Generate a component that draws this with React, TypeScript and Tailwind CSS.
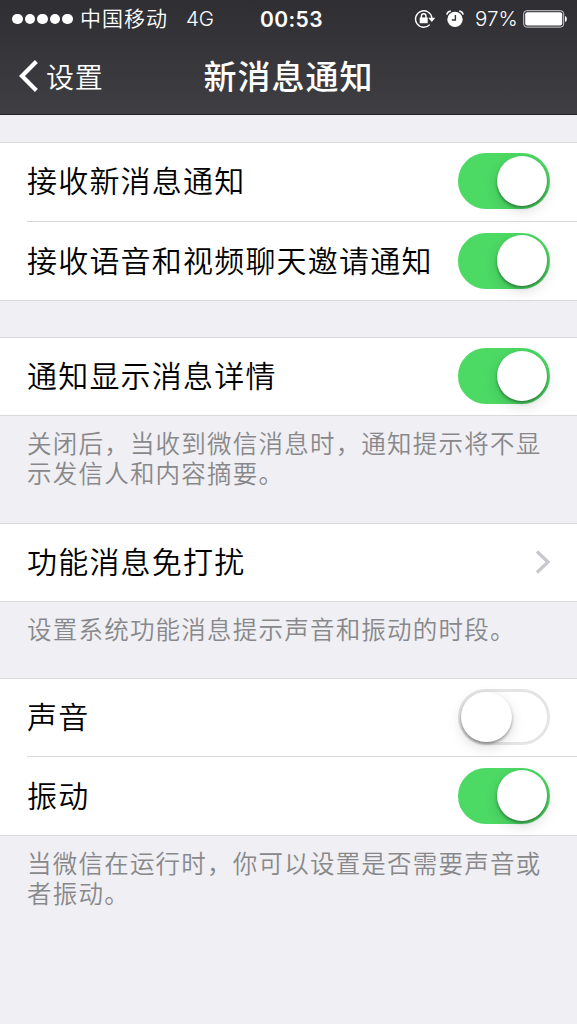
import { useState } from "react";
import clsx from "clsx";

function Toggle({ label, defaultOn = true }: { label: string; defaultOn?: boolean }) {
  const [on, setOn] = useState(defaultOn);

  return (
    <button
      role="switch"
      aria-checked={on}
      aria-label={label}
      onClick={() => setOn(!on)}
      className={clsx(
        "flex h-14 w-[92px] shrink-0 items-center rounded-full border-[3px] transition-colors",
        on ? "justify-end border-[#4cd964] bg-[#4cd964]" : "justify-start border-[#e5e5e5] bg-white"
      )}
    >
      <span className="size-[50.5px] rounded-full bg-white shadow-[0_5px_14px_rgba(0,0,0,0.14),0_2px_3px_rgba(0,0,0,0.35)]" />
    </button>
  );
}

function ToggleRow({ label, defaultOn }: { label: string; defaultOn?: boolean }) {
  return (
    <div className="flex h-full items-center justify-between pb-px pr-[27px]">
      <span className="pb-[4px] text-[30px] font-[350] leading-[40px] tracking-[1.2px] text-black">{label}</span>
      <Toggle label={label} defaultOn={defaultOn} />
    </div>
  );
}

function StatusBar() {
  return (
    <div className="flex h-[38px] items-center pl-3 pr-[10px] text-white">
      <div className="flex w-[248px] items-center">
        <div className="flex gap-[2px]">
          {[0, 1, 2, 3, 4].map((i) => (
            <span key={i} className="size-[10.6px] rounded-full bg-white" />
          ))}
        </div>
        <span className="ml-[7px] pb-[3px] text-[21px] font-[350] leading-none tracking-[1px]">中国移动</span>
        <span className="ml-[18px] font-[Inter,sans-serif] text-[20.5px] font-[350] leading-none">4G</span>
      </div>
      <span className="font-[Inter,sans-serif] text-[21px] font-semibold leading-none tracking-[0.4px]">00:53</span>
      <div className="ml-auto flex items-center">
        {/* Rotation lock */}
        <svg width="22" height="20" viewBox="0 0 22 20" fill="none" stroke="white" strokeWidth="1.4" className="-mt-px">
          <path d="M15.8 15.6A8.2 8.2 0 1 1 17.9 9" />
          <path d="M14.3 8.8h7l-3.5 4.2z" fill="white" stroke="none" />
          <rect x="5.7" y="8.4" width="8" height="5.8" fill="white" stroke="none" />
          <path d="M7.4 9V7a2.3 2.3 0 0 1 4.6 0V9" />
        </svg>
        {/* Alarm */}
        <svg width="18" height="18" viewBox="0 0 18 18" fill="none" className="-mt-px ml-[10px]">
          <circle cx="9" cy="9.4" r="7.7" fill="white" />
          <path d="M9.4 5v5H5.8" stroke="#313036" strokeWidth="1.4" />
          <path d="M.8 4.6C1.2 2.8 2.6 1.3 4.8 1M17.2 4.6c-.4-1.8-1.8-3.3-4-3.6" stroke="white" strokeWidth="1.5" />
        </svg>
        <span className="ml-[11px] w-[44px] whitespace-nowrap font-[Inter,sans-serif] text-[20.5px] font-[350] leading-none">97%</span>
        {/* Battery */}
        <svg width="44" height="18" viewBox="0 0 44 18" fill="none" className="-mt-px ml-[4px]">
          <rect x=".7" y=".7" width="40" height="16.4" rx="3" stroke="white" strokeOpacity=".75" />
          <rect x="2.2" y="2.2" width="37" height="13.4" rx="2" fill="white" />
          <path d="M42 6c1.3.4 1.8 1.5 1.8 3s-.5 2.6-1.8 3z" fill="white" />
        </svg>
      </div>
    </div>
  );
}

export default function App() {
  return (
    <div className="min-h-screen w-full bg-[#efeff4] font-['Noto_Sans_CJK_SC',sans-serif]">
      <header className="h-[115px] border-b border-[#242329] bg-linear-to-b from-[#2f2e33] to-[#3f3e43]">
        <StatusBar />
        <div className="grid h-[76px] grid-cols-[1fr_auto_1fr] items-center text-white">
          <button className="flex items-center pl-[19px]">
            <svg width="19" height="32" viewBox="0 0 19 32" fill="none" stroke="white" strokeWidth="4.2">
              <path d="M17.4 1.5 3 16l14.4 14.5" />
            </svg>
            <span className="ml-2 text-[28px] font-[350] leading-none tracking-[0.8px]">设置</span>
          </button>
          <h1 className="pb-[2px] text-[33px] font-medium leading-none tracking-[1px]">新消息通知</h1>
        </div>
      </header>

      <main>
        <section className="mt-[27px] h-[159px] border-y border-[#d9d9dc] bg-white pl-[27px]">
          <div className="h-[79px] border-b border-[#d9d9dc] pb-px">
            <ToggleRow label="接收新消息通知" />
          </div>
          <div className="h-[78px]">
            <ToggleRow label="接收语音和视频聊天邀请通知" />
          </div>
        </section>

        <section className="mt-9 h-[79px] border-y border-[#d9d9dc] bg-white pl-[27px]">
          <ToggleRow label="通知显示消息详情" />
        </section>
        <p className="h-[107px] px-[27px] pt-[12px] text-[24.5px] font-[350] leading-[30px] tracking-[1.22px] text-[#88888a]">
          关闭后，当收到微信消息时，通知提示将不显
          <br />
          示发信人和内容摘要。
        </p>

        <section className="h-[79px] border-y border-[#d9d9dc] bg-white pl-[27px]">
          <button className="flex h-full w-full items-center justify-between pb-px pr-[26px]">
            <span className="pb-[4px] text-[30px] font-[350] leading-[40px] tracking-[1.2px] text-black">功能消息免打扰</span>
            <svg width="16" height="24" viewBox="0 0 16 24" fill="none" stroke="#c7c7cc" strokeWidth="3.2">
              <path d="M2 1.5 13 12 2 22.5" />
            </svg>
          </button>
        </section>
        <p className="h-[76px] px-[27px] pt-[12px] text-[24.5px] font-[350] leading-[30px] tracking-[1.22px] text-[#88888a]">
          设置系统功能消息提示声音和振动的时段。
        </p>

        <section className="h-[158px] border-y border-[#d9d9dc] bg-white pl-[27px]">
          <div className="h-[78px] border-b border-[#d9d9dc]">
            <ToggleRow label="声音" defaultOn={false} />
          </div>
          <div className="h-[78px]">
            <ToggleRow label="振动" />
          </div>
        </section>
        <p className="px-[27px] pt-[12px] text-[24.5px] font-[350] leading-[30px] tracking-[1.22px] text-[#88888a]">
          当微信在运行时，你可以设置是否需要声音或
          <br />
          者振动。
        </p>
      </main>
    </div>
  );
}
